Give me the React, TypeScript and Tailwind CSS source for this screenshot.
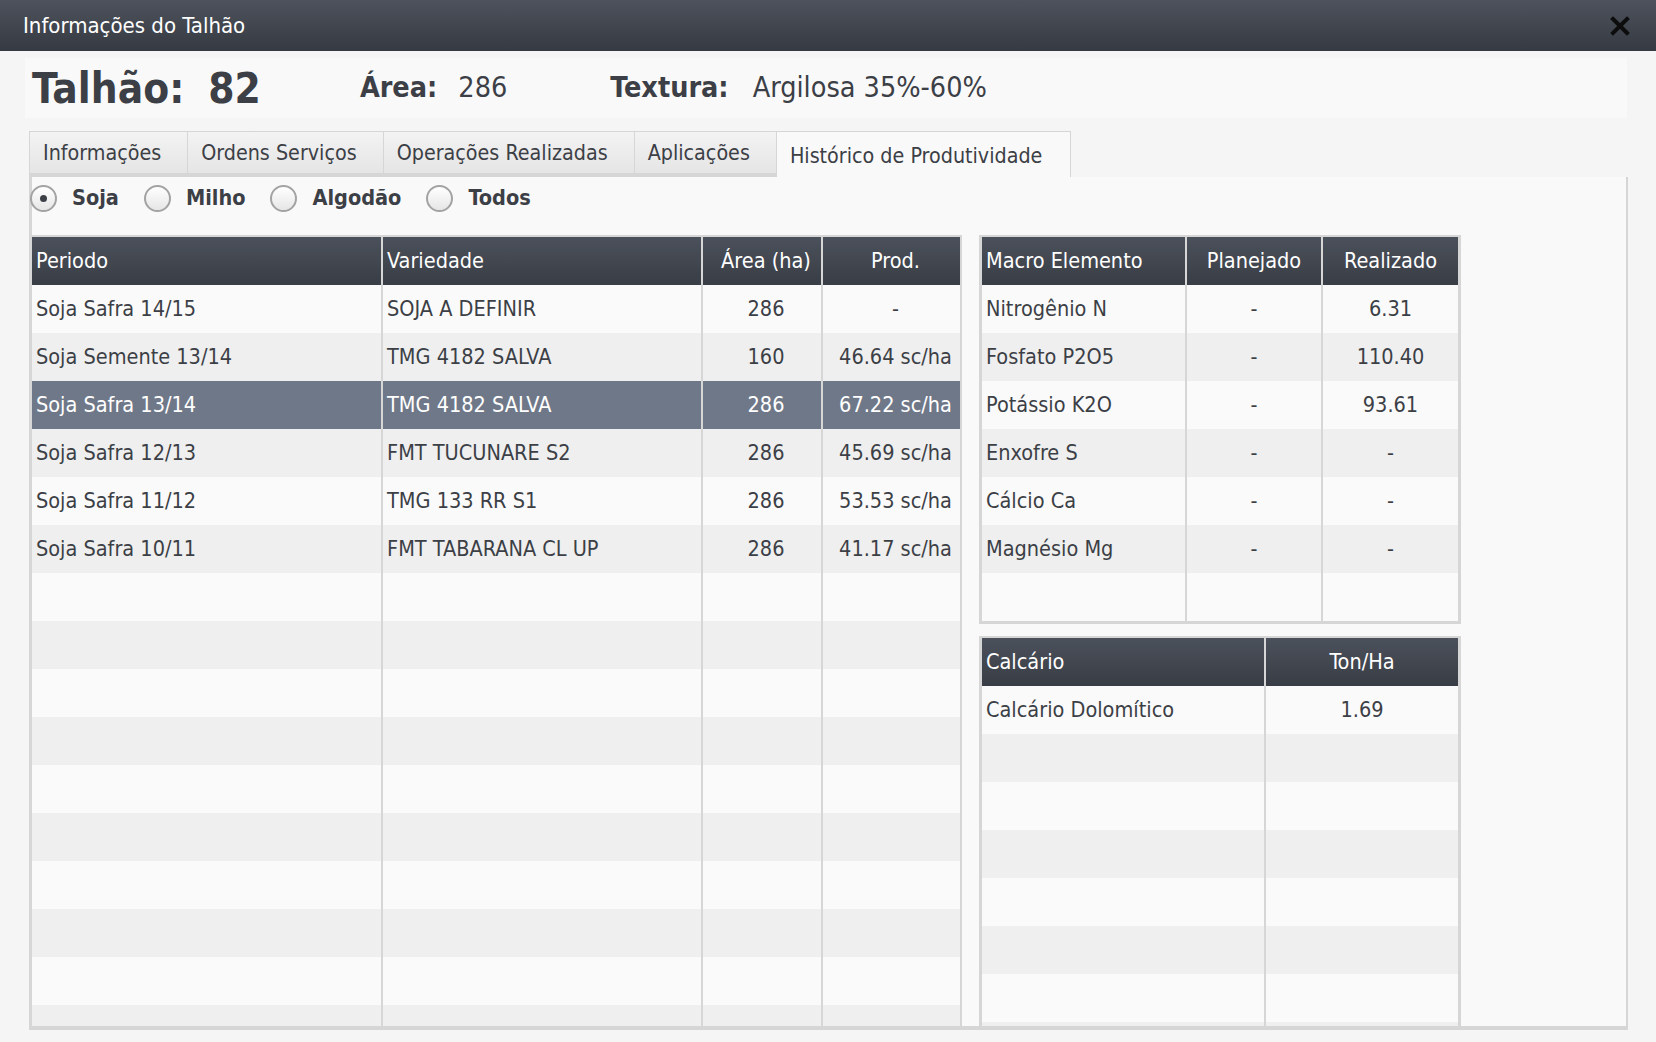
import React from 'react'

// Histórico de produtividade do talhão
const periodos = [
  { periodo: 'Soja Safra 14/15', variedade: 'SOJA A DEFINIR', area: '286', prod: '-' },
  { periodo: 'Soja Semente 13/14', variedade: 'TMG 4182 SALVA', area: '160', prod: '46.64 sc/ha' },
  { periodo: 'Soja Safra 13/14', variedade: 'TMG 4182 SALVA', area: '286', prod: '67.22 sc/ha' },
  { periodo: 'Soja Safra 12/13', variedade: 'FMT TUCUNARE S2', area: '286', prod: '45.69 sc/ha' },
  { periodo: 'Soja Safra 11/12', variedade: 'TMG 133 RR S1', area: '286', prod: '53.53 sc/ha' },
  { periodo: 'Soja Safra 10/11', variedade: 'FMT TABARANA CL UP', area: '286', prod: '41.17 sc/ha' },
]

const macros = [
  { nome: 'Nitrogênio N', plan: '-', real: '6.31' },
  { nome: 'Fosfato P2O5', plan: '-', real: '110.40' },
  { nome: 'Potássio K2O', plan: '-', real: '93.61' },
  { nome: 'Enxofre S', plan: '-', real: '-' },
  { nome: 'Cálcio Ca', plan: '-', real: '-' },
  { nome: 'Magnésio Mg', plan: '-', real: '-' },
]

const tabs = ['Informações', 'Ordens Serviços', 'Operações Realizadas', 'Aplicações']

const SELECTED = 2

function Radio({ checked, label }: { checked?: boolean; label: string }) {
  return (
    <div className="flex items-center">
      <span className="w-[27px] h-[27px] rounded-full border-2 border-[#a3a3a3] bg-gradient-to-b from-[#ffffff] to-[#e6e6e6] flex items-center justify-center">
        {checked && <span className="w-[7px] h-[7px] rounded-full bg-[#3c3f46]" />}
      </span>
      <span className="ml-[15px] mr-[25px] text-[21.5px] font-bold text-[#3c3f46]">{label}</span>
    </div>
  )
}

function Cell({ w, children, center, shift, first }: { w: string; children?: React.ReactNode; center?: boolean; shift?: boolean; first?: boolean }) {
  return (
    <div
      className={`${w} shrink-0 h-full flex items-center whitespace-nowrap ${shift ? 'pl-[10px] pr-[2px]' : 'px-[4px]'} ${center ? 'justify-center' : ''} ${first ? '' : 'border-l-2 border-[#d6d6d6]'}`}
    >
      {children}
    </div>
  )
}

const headBg = 'bg-gradient-to-b from-[#4b515b] to-[#393d45] text-white'

export default function App() {
  const emptyLeft = Array.from({ length: 11 })
  const emptyCal = Array.from({ length: 7 })

  return (
    <div className="w-[1656px] h-[1042px] overflow-hidden bg-[#f5f5f5] text-[#3c3f46] font-['DejaVu_Sans_Condensed','DejaVu_Sans',sans-serif]">
      {/* Barra de título */}
      <div className="h-[51px] bg-gradient-to-b from-[#4d525c] to-[#363a42] flex items-center justify-between pl-[23px] pr-[26px]">
        <span className="text-white text-[22px]">Informações do Talhão</span>
        <svg width="20" height="20" viewBox="0 0 20 20">
          <path d="M3 3 L17 17 M17 3 L3 17" stroke="#0d0d0d" strokeWidth="4" strokeLinecap="square" />
        </svg>
      </div>

      {/* Cabeçalho */}
      <div className="ml-[25px] w-[1602px] mt-[7px] h-[60px] bg-[#f9f9f9] flex items-center pl-[7px]">
        <span className="text-[42px] font-bold">Talhão:</span>
        <span className="text-[42px] font-bold ml-[24px]">82</span>
        <span className="text-[28.5px] font-bold ml-[99px]">Área:</span>
        <span className="text-[28.5px] ml-[21px]">286</span>
        <span className="text-[28.5px] font-bold ml-[103px]">Textura:</span>
        <span className="text-[28.5px] ml-[24px]">Argilosa 35%-60%</span>
      </div>

      {/* Abas */}
      <div className="ml-[29px] mt-[13px] h-[46px] flex items-stretch">
        {tabs.map((t) => (
          <div key={t} className="pl-[13px] pr-[26px] flex items-center text-[21.3px] bg-gradient-to-b from-[#f3f3f3] to-[#e5e5e5] border-t border-r border-[#d6d6d6] border-b-4 border-b-[#d6d6d6] first:border-l">
            {t}
          </div>
        ))}
        <div className="pl-[13px] pr-[28px] pt-[3px] flex items-center text-[21.3px] bg-[#f9f9f9] border-t border-r border-[#d6d6d6]">
          Histórico de Produtividade
        </div>
      </div>

      {/* Conteúdo da aba */}
      <div className="ml-[29px] w-[1599px] h-[853px] bg-[#f9f9f9] border-l-[3px] border-r-2 border-b-4 border-[#d6d6d6] flex items-stretch">
        {/* Coluna esquerda */}
        <div className="w-[930px] flex flex-col">
          <div className="h-[58px] flex items-center pb-[15px] -ml-[2px]">
            <Radio checked label="Soja" />
            <Radio label="Milho" />
            <Radio label="Algodão" />
            <Radio label="Todos" />
          </div>
          <div className="flex-1 overflow-hidden border-t-2 border-r-2 border-[#d6d6d6] text-[21.5px]">
            <div className={`h-[48px] flex ${headBg}`}>
              <Cell w="w-[349px]" first>Periodo</Cell>
              <Cell w="w-[320px]">Variedade</Cell>
              <Cell w="w-[120px]" center shift>Área (ha)</Cell>
              <Cell w="w-[139px]" center shift>Prod.</Cell>
            </div>
            {periodos.map((r, i) => (
              <div
                key={r.periodo}
                className={`h-[48px] flex ${i === SELECTED ? 'bg-[#6f7888] text-white' : i % 2 === 0 ? 'bg-[#fafafa]' : 'bg-[#efefef]'}`}
              >
                <Cell w="w-[349px]" first>{r.periodo}</Cell>
                <Cell w="w-[320px]">{r.variedade}</Cell>
                <Cell w="w-[120px]" center shift>{r.area}</Cell>
                <Cell w="w-[139px]" center shift>{r.prod}</Cell>
              </div>
            ))}
            {emptyLeft.map((_, i) => (
              <div key={i} className={`h-[48px] flex ${i % 2 === 0 ? 'bg-[#fafafa]' : 'bg-[#efefef]'}`}>
                <Cell w="w-[349px]" first />
                <Cell w="w-[320px]" />
                <Cell w="w-[120px]" />
                <Cell w="w-[139px]" />
              </div>
            ))}
          </div>
        </div>

        {/* Coluna direita */}
        <div className="ml-[17px] w-[482px] flex flex-col pt-[58px] text-[21.5px]">
          <div className="border-t-2 border-l-[3px] border-r-[3px] border-b-[3px] border-[#d6d6d6]">
            <div className={`h-[48px] flex ${headBg}`}>
              <Cell w="w-[203px]" first>Macro Elemento</Cell>
              <Cell w="w-[136px]" center>Planejado</Cell>
              <Cell w="w-[137px]" center>Realizado</Cell>
            </div>
            {macros.map((m, i) => (
              <div key={m.nome} className={`h-[48px] flex ${i % 2 === 0 ? 'bg-[#fafafa]' : 'bg-[#efefef]'}`}>
                <Cell w="w-[203px]" first>{m.nome}</Cell>
                <Cell w="w-[136px]" center>{m.plan}</Cell>
                <Cell w="w-[137px]" center>{m.real}</Cell>
              </div>
            ))}
            <div className="h-[48px] flex bg-[#fafafa]">
              <Cell w="w-[203px]" first />
              <Cell w="w-[136px]" />
              <Cell w="w-[137px]" />
            </div>
          </div>

          <div className="mt-[12px] flex-1 overflow-hidden border-t-2 border-l-[3px] border-r-[3px] border-[#d6d6d6]">
            <div className={`h-[48px] flex ${headBg}`}>
              <Cell w="w-[282px]" first>Calcário</Cell>
              <Cell w="w-[194px]" center>Ton/Ha</Cell>
            </div>
            <div className="h-[48px] flex bg-[#fafafa]">
              <Cell w="w-[282px]" first>Calcário Dolomítico</Cell>
              <Cell w="w-[194px]" center>1.69</Cell>
            </div>
            {emptyCal.map((_, i) => (
              <div key={i} className={`h-[48px] flex ${i % 2 === 0 ? 'bg-[#efefef]' : 'bg-[#fafafa]'}`}>
                <Cell w="w-[282px]" first />
                <Cell w="w-[194px]" />
              </div>
            ))}
          </div>
        </div>
      </div>
    </div>
  )
}
